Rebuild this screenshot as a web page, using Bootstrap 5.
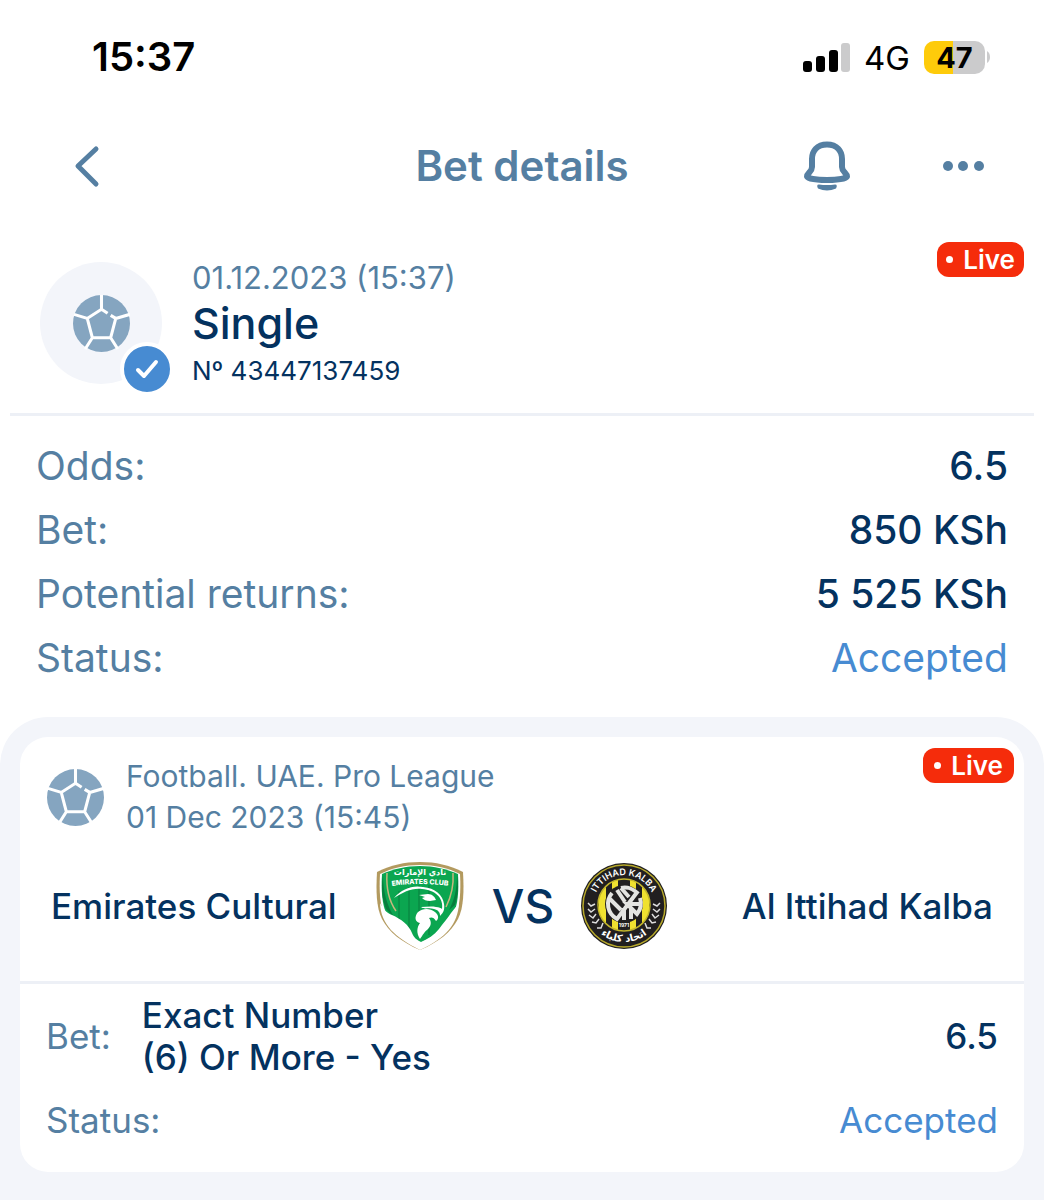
<!DOCTYPE html>
<html lang="en">
<head>
<meta charset="utf-8">
<meta name="viewport" content="width=device-width, initial-scale=1">
<title>Bet details</title>
<link href="https://cdn.jsdelivr.net/npm/bootstrap@5.3.0/dist/css/bootstrap.min.css" rel="stylesheet">
<style>
  :root { --steel: #557fa2; --navy: #04325f; --sky: #478bd2; --mist: #f3f5fa; --rule: #edf0f6; }
  body { font-family: Inter, "Noto Sans", sans-serif; color: var(--navy); background: #fff; }
  svg { display: block; flex: none; }
  .c-steel { color: var(--steel); }
  .c-sky { color: var(--sky); }
  .status-bar { height: 114px; padding: 0 54px 0 92px; color: #000; }
  .clock { font-size: 40px; font-weight: 600; }
  .network { margin: 2px 14px 0; font-size: 33px; line-height: 40px; }
  .battery { width: 61px; height: 33px; border-radius: 10px; background: linear-gradient(90deg, #fecb0a 48%, #cbcbcc 48%); font-size: 29px; line-height: 33px; font-weight: 700; }
  .app-bar { height: 104px; padding: 0 58px; }
  .app-bar h1 { font-size: 42px; line-height: 52px; font-weight: 600; }
  .app-bar .side { flex: 1 1 0; gap: 90px; }
  .icon-btn { border: 0; padding: 0; background: none; color: var(--steel); }
  .back-btn { padding-left: 14px; }
  .summary { margin: 0 10px; padding: 24px 10px 21px 30px; border-bottom: 3px solid var(--rule); }
  .avatar { width: 122px; height: 122px; margin-top: 20px; background: var(--mist); }
  .tick { right: -12px; bottom: -12px; width: 54px; height: 54px; border: 4px solid #fff; background: var(--sky); }
  .summary-text { margin: 18px 0 0 30px; }
  .when { font-size: 31px; line-height: 36px; }
  .kind { font-size: 43px; line-height: 54px; font-weight: 500; }
  .number { font-size: 26px; line-height: 42px; }
  .live { height: 35px; padding: 0 9px; border-radius: 12px; background: #f52c0b; color: #fff; font-size: 26px; line-height: 35px; font-weight: 600; gap: 10px; }
  .event .live { padding: 0 11px; }
  .live i { width: 7px; height: 7px; border-radius: 50%; background: #fff; }
  .facts { padding: 18px 36px 27px; font-size: 39px; line-height: 64px; }
  .facts dt { font-weight: 400; }
  .facts dd { font-weight: 500; }
  .facts .c-sky, .selection .c-sky { font-weight: 400; }
  .events { padding: 20px 20px 28px; border-radius: 48px 48px 0 0; background: var(--mist); }
  .event { border-radius: 28px; background: #fff; }
  .event-head { padding: 11px 10px 0 27px; }
  .league-ball { margin-top: 21px; }
  .league { margin: 8px 0 0 22px; font-size: 30px; line-height: 41px; }
  .teams { padding: 18px 31px 25px; font-size: 35px; font-weight: 500; height: 146px; border-bottom: 3px solid var(--rule); }
  .teams .team { flex: 1 1 0; }
  .versus { font-size: 46px; font-weight: 500; width: 116px; }
  .selection { padding: 10px 26px 15px; font-size: 35px; line-height: 42px; }
  .selection dt { font-weight: 400; }
  .selection dd { font-weight: 500; }
  .pick { margin-left: 31px; }
  .outcome { padding: 21px 0 16px; }
  .selection .mb-0, .selection dt { margin-bottom: 0; }
</style>
</head>
<body>
<svg width="0" height="0" class="position-absolute" aria-hidden="true">
  <symbol id="ball" viewBox="0 0 56 56">
    <circle cx="28" cy="28" r="28" fill="#85a5c0"/>
    <path d="M28 0v14M34 18l-6-4-14 9L1 19M14 23l5 19h18l5-19 14-4M19 42l-7 11M37 42l7 11M42 23l-5-3" fill="none" stroke="#fff" stroke-width="3"/>
  </symbol>
</svg>

<div class="status-bar d-flex align-items-center justify-content-between">
  <div class="clock">15:37</div>
  <div class="d-flex align-items-center">
    <svg width="48" height="32" viewBox="0 0 48 32" aria-hidden="true">
      <rect x="1" y="20" width="9" height="11" rx="3"/><rect x="14" y="15" width="9" height="16" rx="3"/><rect x="27" y="9" width="9" height="22" rx="3"/><rect x="39" y="2" width="9" height="29" rx="3" fill="#cbcbcc"/>
    </svg>
    <span class="network">4G</span>
    <span class="battery text-center">47</span>
    <svg width="5" height="12" viewBox="0 0 5 12" aria-hidden="true"><path d="M2 0q3 2 3 6t-3 6z" fill="#cbcbcc"/></svg>
  </div>
</div>

<header class="app-bar d-flex align-items-center">
  <div class="side d-flex align-items-center">
    <button class="icon-btn back-btn" type="button" aria-label="Back">
      <svg width="30" height="44" viewBox="0 0 30 44"><path d="M24 5L6 22l18 18" fill="none" stroke="currentColor" stroke-width="5" stroke-linecap="round" stroke-linejoin="round"/></svg>
    </button>
  </div>
  <h1 class="c-steel m-0">Bet details</h1>
  <div class="side d-flex align-items-center justify-content-end">
    <button class="icon-btn" type="button" aria-label="Notifications">
      <svg width="48" height="52" viewBox="0 0 48 52"><path d="M23 4.500C13 4.500 8 11 8 19v8c0 5-5 6-5 9.500 0 2 9 3.500 20 3.500s20-1.500 20-3.500c0-3.500-5-4.500-5-9.500v-8C38 11 33 4.500 23 4.500z" fill="none" stroke="currentColor" stroke-width="6" stroke-linejoin="round"/><path d="M15 44.500q8 1 16 0 3 0 1 4-9 4-18 0-2-4 1-4z" fill="currentColor"/></svg>
    </button>
    <button class="icon-btn" type="button" aria-label="More">
      <svg width="44" height="12" viewBox="0 0 44 12" fill="currentColor"><circle cx="6" cy="6" r="5"/><circle cx="21" cy="6" r="5"/><circle cx="37" cy="6" r="5"/></svg>
    </button>
  </div>
</header>

<main>
  <section class="summary d-flex align-items-start">
    <div class="avatar rounded-circle position-relative d-flex align-items-center justify-content-center">
      <svg width="57" height="57" aria-hidden="true"><use href="#ball"/></svg>
      <span class="tick position-absolute rounded-circle d-flex align-items-center justify-content-center">
        <svg width="24" height="20" viewBox="0 0 24 20" aria-hidden="true"><path d="M3 11l6 6L21 3" fill="none" stroke="#fff" stroke-width="4" stroke-linecap="round" stroke-linejoin="round"/></svg>
      </span>
    </div>
    <div class="summary-text">
      <div class="when c-steel">01.12.2023 (15:37)</div>
      <div class="kind">Single</div>
      <div class="number">Nº 43447137459</div>
    </div>
    <span class="live ms-auto d-flex align-items-center"><i></i>Live</span>
  </section>

  <dl class="facts m-0">
    <div class="d-flex justify-content-between"><dt class="c-steel">Odds:</dt><dd class="m-0">6.5</dd></div>
    <div class="d-flex justify-content-between"><dt class="c-steel">Bet:</dt><dd class="m-0">850 KSh</dd></div>
    <div class="d-flex justify-content-between"><dt class="c-steel">Potential returns:</dt><dd class="m-0">5 525 KSh</dd></div>
    <div class="d-flex justify-content-between"><dt class="c-steel">Status:</dt><dd class="m-0 c-sky">Accepted</dd></div>
  </dl>

  <section class="events">
    <article class="event">
      <div class="event-head d-flex align-items-start">
        <svg class="league-ball" width="57" height="57" aria-hidden="true"><use href="#ball"/></svg>
        <div class="league c-steel">Football. UAE. Pro League<br>01 Dec 2023 (15:45)</div>
        <span class="live ms-auto d-flex align-items-center"><i></i>Live</span>
      </div>

      <div class="teams d-flex align-items-center">
        <div class="team">Emirates Cultural</div>
        <svg width="90" height="90" viewBox="0 0 90 90" role="img" aria-label="Emirates Club crest">
          <path d="M45 1C61 1 74 4 88 11c1 18 1 35-5 47C76 71 64 81 45 89 26 81 14 71 7 58 1 46 1 29 2 11 16 4 29 1 45 1z" fill="#b39a5f"/>
          <path d="M45 4c15 0 28 3 40 9 1 18 0 32-5 43-6 12-17 21-35 29C27 77 16 68 10 56 5 45 4 31 5 13c12-6 25-9 40-9z" fill="#fff"/>
          <path d="M45 5c14 0 27 3 38 8 1 17 0 30-5 42-6 12-17 20-33 27-16-7-27-15-33-27C7 43 6 30 7 13c11-5 24-8 38-8z" fill="#0ba650"/>
          <path d="M8 14c0 17 4 30 11 42l-8-8C7 38 6 27 8 14zM82 14c0 15-3 26-8 35l6-5c3-10 4-19 2-30z" fill="#087d3d"/>
          <path d="M24 30v30M34 26v44M44 24v52M54 24v50" stroke="#087d3d" stroke-width="1"/>
          <path d="M12 12c-1 16 2 28 9 38M78 12c1 14-2 24-7 34" fill="none" stroke="#c7b77e" stroke-width="1.500"/>
          <path d="M5 42c4 7 7 10 12 12 9 4 17 10 20 18 2 5 5 7 9 9 7-3 13-7 18-13 4-6 9-11 12-16l8-10c-1 21-13 35-39 47C20 76 6 64 5 42z" fill="#fff"/>
          <path d="M19 37c8-9 18-13 29-11 12 1 20 8 21 17 1 6-1 9-4 12 0-4-2-6-6-7-6-2-9 1-13-2 5 0 10-1 15 0 3 0 5 1 6 2 2-11-7-19-20-20-11-1-18 3-28 9z" fill="#fff"/>
          <path d="M44 34l9-1c4 0 7 3 8 6l-6 1c-4 0-6-1-8-3l3-1z" fill="#fff"/>
          <path d="M45 78c-4-6-3-12 0-16-5-1-6-6-2-11 5-4 12-4 17 0 4 3 4 7 1 9-2-4-5-4-7-3 3 4 2 8-1 11-4 3-5 6-8 10z" fill="#fff"/>
          <text x="45" y="14" text-anchor="middle" font-family="DejaVu Sans" font-size="8" font-weight="700" fill="#fff">نادي الإمارات</text>
          <path id="club-arc" d="M10 26q35-6 70 0" fill="none"/>
          <text font-size="7" font-weight="800" fill="#fff" text-anchor="middle"><textPath href="#club-arc" startOffset="50%">EMIRATES CLUB</textPath></text>
        </svg>
        <div class="versus text-center">VS</div>
        <svg width="88" height="88" viewBox="0 0 88 88" role="img" aria-label="Ittihad Kalba crest">
          <defs><clipPath id="core"><circle cx="43" cy="43" r="26"/></clipPath></defs>
          <circle cx="43" cy="44" r="43" fill="#211f20"/>
          <circle cx="43" cy="44" r="41" fill="none" stroke="#b7a92b" stroke-width="1.500"/>
          <g clip-path="url(#core)"><path fill="#efe130" d="M18 15h7v58h-7zM31 15h6v58h-6zM49 15h6v58h-6zM61 15h7v58h-7z"/></g>
          <circle cx="43" cy="43" r="26" fill="none" stroke="#c2b52c" stroke-width="1.500"/>
          <circle cx="43" cy="42" r="19" fill="#211f20"/>
          <g fill="none" stroke="#e4e4e1" stroke-width="4">
            <path d="M31 31a17 17 0 0 0 5 26l21-28M28 36l12 12M36 28l8 12M40 26l8 9M40 26a17 17 0 0 1 17 6M59 36a17 17 0 0 1-3 16L46 42h13M43 46v12M50 46v11"/>
          </g>
          <path id="top-arc" d="M12 44a31 31 0 0 1 62 0" fill="none"/>
          <text font-size="9" font-weight="600" fill="#fff" text-anchor="middle"><textPath href="#top-arc" startOffset="50%">ITTIHAD KALBA</textPath></text>
          <path id="low-arc" d="M5 42a38 38 0 0 0 76 0" fill="none"/>
          <text font-family="DejaVu Sans" font-size="10" font-weight="700" fill="#fff" text-anchor="middle"><textPath href="#low-arc" startOffset="50%">اتحاد كلباء</textPath></text>
          <text x="43" y="65" font-size="5" font-weight="700" fill="#fff" text-anchor="middle">1971</text>
          <path d="M7 41l3 3 4-2M7 47l3 3 4-3M8 53l4 3 3-4M11 60l4 1 3-4M16 66l4 0 2-5M79 41l-3 3-4-2M79 47l-3 3-4-3M78 53l-4 3-3-4M75 60l-4 1-3-4M70 66l-4 0-2-5" fill="none" stroke="#ddd" stroke-width="1.500"/>
        </svg>
        <div class="team text-end">Al Ittihad Kalba</div>
      </div>

      <dl class="selection m-0">
        <div class="d-flex align-items-center"><dt class="c-steel">Bet:</dt><dd class="pick mb-0">Exact Number<br>(6) Or More - Yes</dd><dd class="ms-auto mb-0">6.5</dd></div>
        <div class="outcome d-flex justify-content-between"><dt class="c-steel">Status:</dt><dd class="m-0 c-sky">Accepted</dd></div>
      </dl>
    </article>
  </section>
</main>
<script src="https://cdn.jsdelivr.net/npm/bootstrap@5.3.0/dist/js/bootstrap.bundle.min.js"></script>
</body>
</html>
